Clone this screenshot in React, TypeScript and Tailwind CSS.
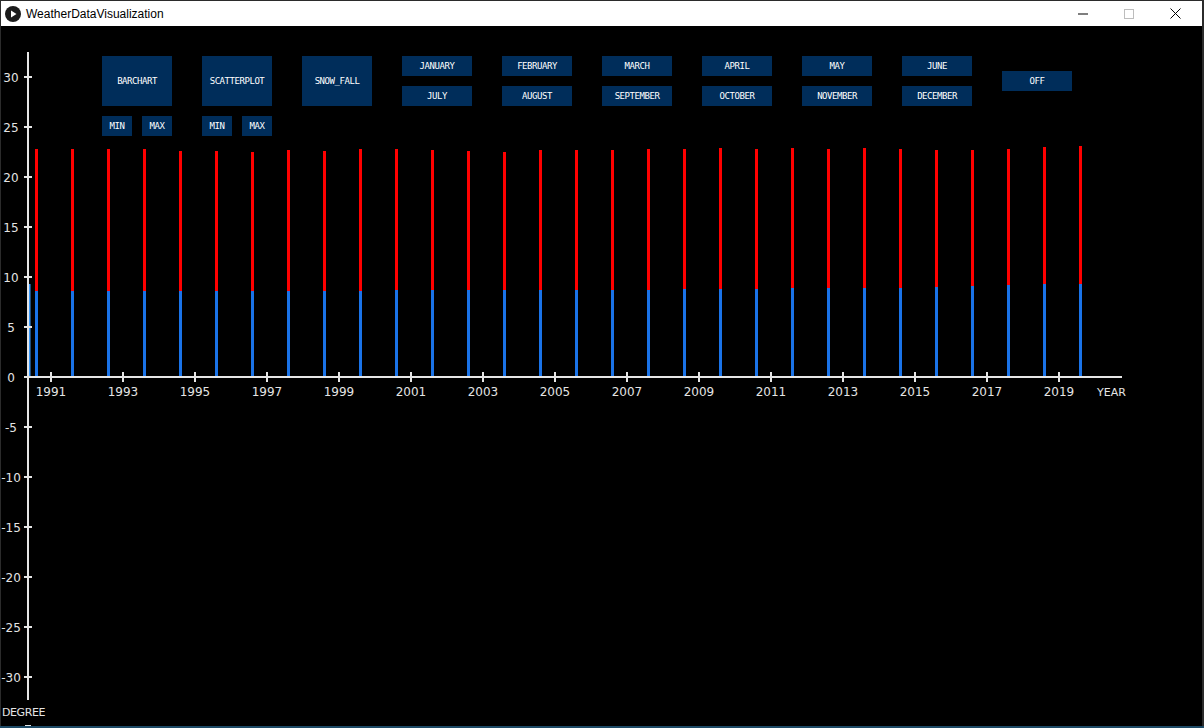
import React from 'react';

// screen-space y of the top of each red (max) and blue (min) bar, 1990..2019
const RED_TOPS = [149, 149, 149, 149, 151, 151, 152, 150, 151, 149, 149, 150, 151, 152, 150, 150, 150, 149, 149, 148, 149, 148, 149, 148, 149, 150, 150, 149, 147, 146];
const BLUE_TOPS = [291, 291, 291, 291, 291, 291, 291, 291, 291, 291, 290, 290, 290, 290, 290, 290, 290, 290, 289, 289, 289, 288, 288, 288, 288, 287, 286, 285, 284, 284];

const Y_TICKS = [30, 25, 20, 15, 10, 5, 0, -5, -10, -15, -20, -25, -30];
const X_YEARS = Array.from({ length: 15 }, (_, i) => 1991 + i * 2);

const MONTHS: [string, string][] = [
  ['JANUARY', 'JULY'],
  ['FEBRUARY', 'AUGUST'],
  ['MARCH', 'SEPTEMBER'],
  ['APRIL', 'OCTOBER'],
  ['MAY', 'NOVEMBER'],
  ['JUNE', 'DECEMBER'],
];

function Btn({ label, className }: { label: string; className: string }) {
  return (
    <div
      className={`bg-[#002d5a] text-white flex items-center justify-center font-['DejaVu_Sans_Mono',monospace] text-[9px] tracking-[-0.45px] leading-none ${className}`}
    >
      {label}
    </div>
  );
}

function ChartGroup({ label }: { label: string }) {
  return (
    <div className="flex flex-col gap-[10px]">
      <Btn label={label} className="w-[70px] h-[50px]" />
      <div className="flex gap-[10px]">
        <Btn label="MIN" className="w-[30px] h-[20px]" />
        <Btn label="MAX" className="w-[30px] h-[20px]" />
      </div>
    </div>
  );
}

function Controls() {
  return (
    <div className="absolute left-[101px] top-[30px] flex items-start gap-[30px]">
      <ChartGroup label="BARCHART" />
      <ChartGroup label="SCATTERPLOT" />
      <Btn label="SNOW_FALL" className="w-[70px] h-[50px]" />
      {MONTHS.map(([a, b]) => (
        <div key={a} className="flex flex-col gap-[10px]">
          <Btn label={a} className="w-[70px] h-[20px]" />
          <Btn label={b} className="w-[70px] h-[20px]" />
        </div>
      ))}
      <Btn label="OFF" className="w-[70px] h-[20px] mt-[15px]" />
    </div>
  );
}

function Chart() {
  const axis = '#e6e6e6';
  return (
    <svg className="absolute inset-0" width={1201} height={700} viewBox="1 26 1201 700">
      <g fontFamily="'DejaVu Sans', sans-serif" fontSize={12} fill="#e4e4e4">
        {/* first (light) bar hugging the axis */}
        <rect x={28.5} y={284} width={2} height={92} fill="#3a9cff" />
        {RED_TOPS.map((top, i) => {
          const x = 35 + i * 36;
          const bt = BLUE_TOPS[i];
          return (
            <g key={i}>
              <rect x={x} y={top} width={3} height={bt - top} fill="#ff0000" />
              <rect x={x} y={bt} width={3} height={376 - bt} fill="#1a73e8" />
            </g>
          );
        })}

        {/* y axis */}
        <rect x={27} y={52} width={2} height={648} fill={axis} />
        {Y_TICKS.map((v) => {
          const y = 377 - v * 10;
          return (
            <g key={v}>
              <rect x={24} y={y - 1} width={8} height={2} fill={axis} />
              <text x={11} y={y + 4.5} textAnchor="middle">
                {String(v)}
              </text>
            </g>
          );
        })}

        {/* x axis */}
        <rect x={27} y={376} width={1095} height={2} fill={axis} />
        {X_YEARS.map((yr, i) => {
          const x = 51 + i * 72;
          return (
            <g key={yr}>
              <rect x={x - 1} y={372} width={2} height={10} fill={axis} />
              <text x={x} y={396} textAnchor="middle">
                {yr}
              </text>
            </g>
          );
        })}
        <text x={1097} y={396} fontSize={11}>
          YEAR
        </text>
        <text x={2} y={716} fontSize={11} letterSpacing={-0.4}>
          DEGREE
        </text>
        <rect x={25} y={725} width={6} height={1} fill={axis} />
      </g>
    </svg>
  );
}

function TitleBar() {
  return (
    <div className="h-[25px] w-[1201px] ml-px bg-white flex items-center relative">
      <svg width={16} height={16} viewBox="0 0 16 16" className="ml-[4px]">
        <circle cx={8} cy={8} r={8} fill="#1b1b1b" />
        <path d="M6 4.5 L11.5 8 L6 11.5 Z" fill="#ffffff" />
      </svg>
      <span className="ml-[5px] text-[12px] text-black font-['Liberation_Sans',sans-serif]">
        WeatherDataVisualization
      </span>
      <div className="ml-auto flex items-center h-full">
        <div className="w-[46px] h-full flex items-center justify-center">
          <svg width={10} height={10} viewBox="0 0 10 10">
            <rect x={0} y={4.5} width={10} height={1} fill="#000" />
          </svg>
        </div>
        <div className="w-[46px] h-full flex items-center justify-center">
          <svg width={10} height={10} viewBox="0 0 10 10">
            <rect x={0.5} y={0.5} width={9} height={9} fill="none" stroke="#bdbdbd" />
          </svg>
        </div>
        <div className="w-[46px] h-full flex items-center justify-center mr-[4px]">
          <svg width={11} height={11} viewBox="0 0 11 11">
            <path d="M0.5 0.5 L10.5 10.5 M10.5 0.5 L0.5 10.5" stroke="#000" strokeWidth={1} />
          </svg>
        </div>
      </div>
    </div>
  );
}

export default function App() {
  return (
    <div className="w-[1204px] h-[728px] bg-[#2b2b2b] flex flex-col overflow-hidden pt-px">
      <TitleBar />
      <div className="relative w-[1201px] h-[700px] ml-px bg-black overflow-hidden">
        <Chart />
        <Controls />
      </div>
      <div className="h-[2px] bg-[#1d4a66]" />
    </div>
  );
}
